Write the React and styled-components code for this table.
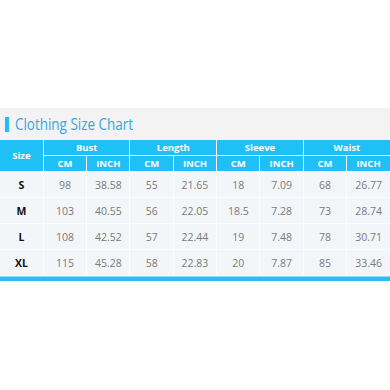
import React from "react";
import styled, { createGlobalStyle } from "styled-components";

const GlobalStyle = createGlobalStyle`
  html, body {
    margin: 0;
    padding: 0;
    background: #ffffff;
  }
  body {
    font-family: "Open Sans", "Noto Sans", sans-serif;
  }
`;

const Page = styled.div`
  width: 390px;
  height: 390px;
  padding-top: 108px;
  box-sizing: border-box;
`;

const TitleBar = styled.div`
  height: 32px;
  background: #f3f3f3;
  display: flex;
  align-items: center;
  gap: 6px;
  padding-left: 5px;
`;

const Accent = styled.span`
  width: 4px;
  height: 15px;
  background: #1fbff3;
`;

const Title = styled.h1`
  margin: 0;
  font-size: 16px;
  font-weight: 400;
  color: #35a8dc;
  transform: scaleX(0.84);
  transform-origin: left center;
  white-space: nowrap;
`;

const Table = styled.table`
  width: 390px;
  border-collapse: collapse;
  table-layout: fixed;
`;

const HeadCell = styled.th`
  background: #1fc0f5;
  color: #ffffff;
  font-size: 9.5px;
  font-weight: 700;
  height: ${(p) => p.$h || 15}px;
  padding: 0;
  text-align: center;
  border: 1px solid #ffffff;
  border-top: none;
  &:first-child {
    border-left: none;
  }
  &:last-child {
    border-right: none;
  }
`;

const Cell = styled.td`
  background: #f3f6f9;
  color: ${(p) => (p.$size ? "#111111" : "#7a7a7a")};
  font-weight: ${(p) => (p.$size ? 700 : 400)};
  font-size: 10.5px;
  height: 25px;
  padding: 0;
  text-align: center;
  border: 1px solid #fbfcfd;
  &:first-child {
    border-left: none;
  }
  &:last-child {
    border-right: none;
  }
`;

const BottomBar = styled.div`
  height: 4px;
  background: #2ebdef;
  border-top: 1px solid #8fdcf7;
`;

const groups = ["Bust", "Length", "Sleeve", "Waist"];

const rows = [
  ["S", "98", "38.58", "55", "21.65", "18", "7.09", "68", "26.77"],
  ["M", "103", "40.55", "56", "22.05", "18.5", "7.28", "73", "28.74"],
  ["L", "108", "42.52", "57", "22.44", "19", "7.48", "78", "30.71"],
  ["XL", "115", "45.28", "58", "22.83", "20", "7.87", "85", "33.46"],
];

export default function App() {
  return (
    <>
      <GlobalStyle />
      <Page>
        <TitleBar>
          <Accent />
          <Title>Clothing Size Chart</Title>
        </TitleBar>
        <Table>
          <thead>
            <tr>
              <HeadCell rowSpan={2} $h={31}>Size</HeadCell>
              {groups.map((g) => (
                <HeadCell key={g} colSpan={2}>
                  {g}
                </HeadCell>
              ))}
            </tr>
            <tr>
              {groups.map((g) => (
                <React.Fragment key={g}>
                  <HeadCell>CM</HeadCell>
                  <HeadCell>INCH</HeadCell>
                </React.Fragment>
              ))}
            </tr>
          </thead>
          <tbody>
            {rows.map((r) => (
              <tr key={r[0]}>
                {r.map((v, i) => (
                  <Cell key={i} $size={i === 0}>
                    {v}
                  </Cell>
                ))}
              </tr>
            ))}
          </tbody>
        </Table>
        <BottomBar />
      </Page>
    </>
  );
}
